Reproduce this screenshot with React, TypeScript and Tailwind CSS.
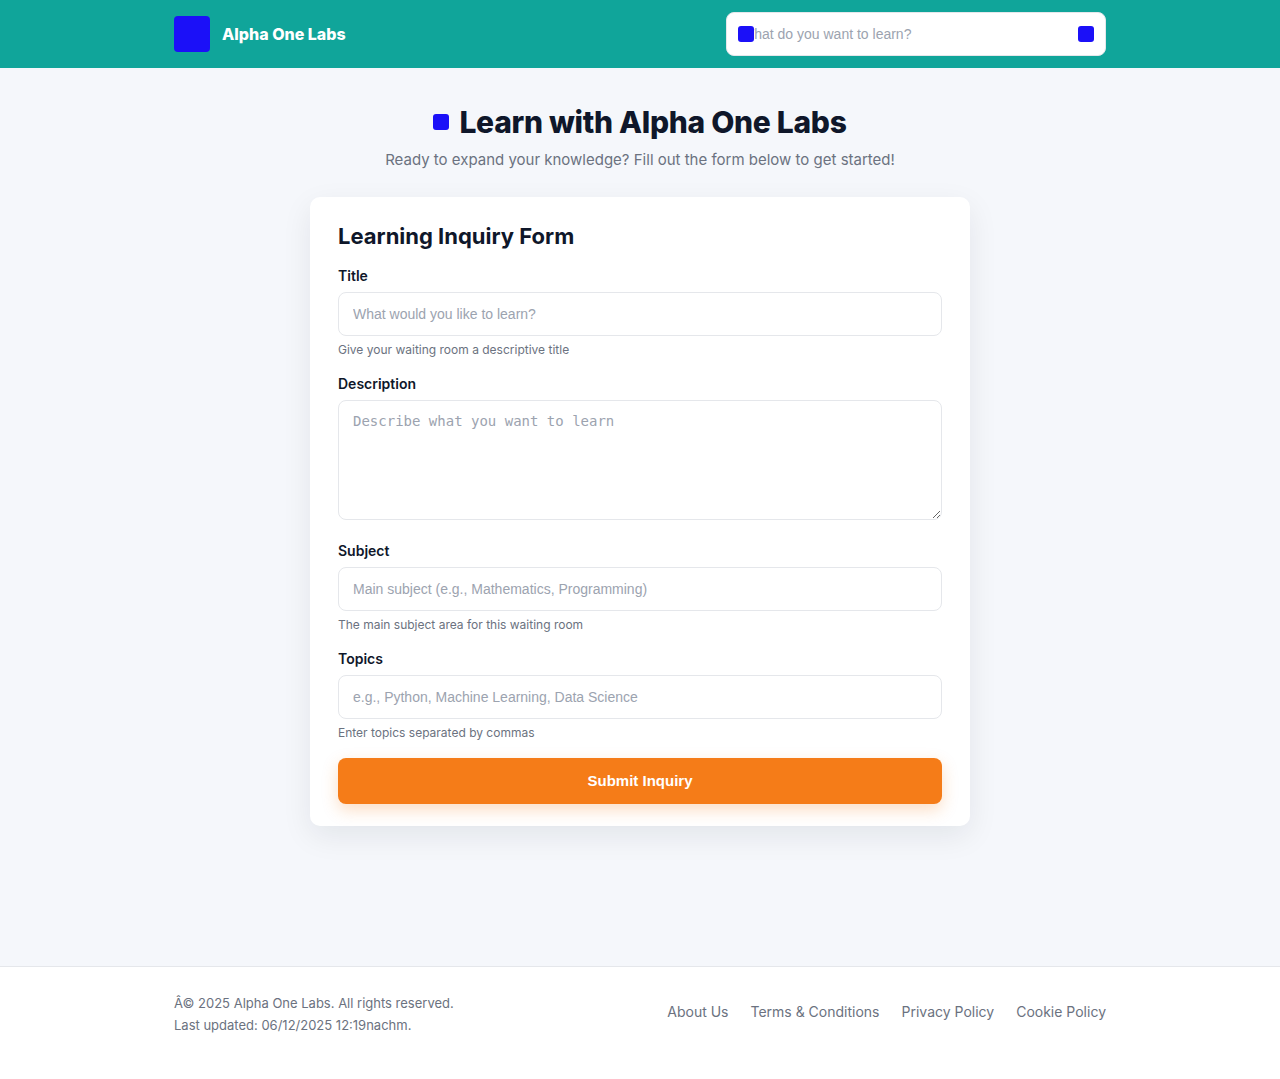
import React from "react";

type FieldProps = {
  id: string;
  label: string;
  placeholder: string;
  help: string;
};

const links = ["About Us", "Terms & Conditions", "Privacy Policy", "Cookie Policy"];

function Field({ id, label, placeholder, help }: FieldProps) {
  return (
    <div className="flex flex-col">
      <label htmlFor={id} className="mb-1.5 text-sm font-semibold text-[#0f172a]">
        {label}
      </label>
      <input
        id={id}
        type="text"
        placeholder={placeholder}
        aria-describedby={`${id}-help`}
        className="h-11 w-full rounded-lg border border-[#e5e7eb] bg-white px-3.5 font-['Liberation_Sans',Arial,sans-serif] text-sm text-[#0f172a] placeholder:text-[#9ca3af]"
      />
      <p id={`${id}-help`} className="mt-1.5 text-xs text-[#6b7280]">
        {help}
      </p>
    </div>
  );
}

export default function App() {
  return (
    <div className="flex min-h-screen flex-col bg-[#f5f7fb] font-['Inter',sans-serif] text-[#0f172a]">
      <header className="bg-[#10a59a]">
        <div className="mx-auto flex max-w-[980px] items-center justify-between gap-6 px-6 py-3">
          <a href="#" className="flex items-center gap-3 text-white">
            <span className="size-9 rounded bg-[#1b10f8]" />
            <span className="text-base font-extrabold">Alpha One Labs</span>
          </a>
          <form role="search" className="relative w-[380px]">
            <input
              type="text"
              aria-label="Search"
              placeholder="What do you want to learn?"
              className="block h-11 w-full rounded-lg border border-[#e5e7eb] bg-white px-3.5 font-['Liberation_Sans',Arial,sans-serif] text-sm text-[#0f172a] placeholder:text-[#9ca3af]"
            />
            <span className="absolute top-3.5 left-3 size-4 rounded-[3px] bg-[#1b10f8]" />
            <button
              type="submit"
              aria-label="Submit search"
              className="absolute top-3.5 right-3 size-4 rounded-[3px] bg-[#1b10f8]"
            />
          </form>
        </div>
      </header>

      <main className="mx-auto w-full max-w-[708px] flex-1 px-6 pt-9 pb-10">
        <div className="mb-[25px] text-center">
          <h1 className="flex items-center justify-center gap-2.5 text-[30px] leading-9 font-extrabold tracking-[-0.01em]">
            <span className="size-4 rounded-[3px] bg-[#1b10f8]" />
            Learn with Alpha One Labs
          </h1>
          <p className="mt-2 text-[15px] leading-6 text-[#6b7280]">
            Ready to expand your knowledge? Fill out the form below to get started!
          </p>
        </div>

        <section className="rounded-[10px] bg-white px-7 pt-6 pb-[22px] shadow-[0_10px_30px_rgba(15,23,42,0.08)]">
          <h2 className="mb-[15px] text-[22px] leading-[30px] font-bold">Learning Inquiry Form</h2>
          <form className="flex flex-col gap-4">
            <Field
              id="title"
              label="Title"
              placeholder="What would you like to learn?"
              help="Give your waiting room a descriptive title"
            />
            <div className="flex flex-col pb-[5px]">
              <label htmlFor="description" className="mb-1.5 text-sm font-semibold">
                Description
              </label>
              <textarea
                id="description"
                placeholder="Describe what you want to learn"
                className="h-[120px] w-full resize-y rounded-lg border border-[#e5e7eb] bg-white px-3.5 py-3 font-['DejaVu_Sans_Mono',monospace] text-sm leading-4 placeholder:text-[#9ca3af]"
              />
            </div>
            <Field
              id="subject"
              label="Subject"
              placeholder="Main subject (e.g., Mathematics, Programming)"
              help="The main subject area for this waiting room"
            />
            <Field
              id="topics"
              label="Topics"
              placeholder="e.g., Python, Machine Learning, Data Science"
              help="Enter topics separated by commas"
            />
            <button
              type="submit"
              className="mt-px h-[46px] w-full rounded-lg bg-[#f57c18] font-['Liberation_Sans',Arial,sans-serif] text-[15px] font-bold text-white shadow-[0_6px_16px_rgba(245,124,24,0.25)]"
            >
              Submit Inquiry
            </button>
          </form>
        </section>
      </main>

      <footer className="border-t border-[#e5e7eb] bg-white">
        <div className="mx-auto flex max-w-[980px] items-center justify-between gap-6 px-6 pt-[25px] pb-[43px] text-[#6b7280]">
          <div className="text-[13px] leading-[22px]">
            <p>Â© 2025 Alpha One Labs. All rights reserved.</p>
            <p>Last updated: 06/12/2025 12:19nachm.</p>
          </div>
          <nav className="flex gap-[22px] pb-1 text-sm">
            {links.map((link) => (
              <a key={link} href="#">
                {link}
              </a>
            ))}
          </nav>
        </div>
      </footer>
    </div>
  );
}
